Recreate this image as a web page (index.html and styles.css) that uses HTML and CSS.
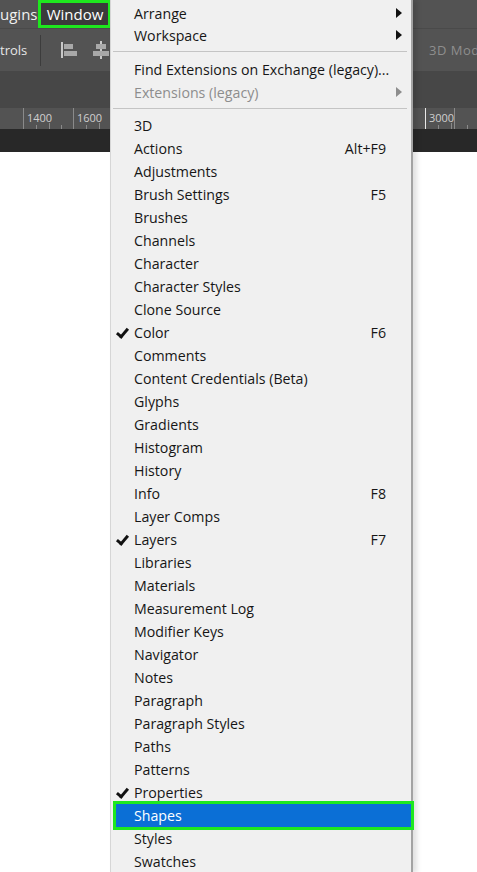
FILE: index.html
```html
<!DOCTYPE html>
<html lang="en">
<head>
  <meta charset="UTF-8" />
  <meta name="viewport" content="width=device-width, initial-scale=1.0"/>
  <title>Window Menu</title>
  <link rel="stylesheet" href="styles.css">
</head>
<body>
  <div class="app">
    <div class="menubar">
      <span class="mb-item">ugins</span>
      <span class="mb-item active">Window</span>
    </div>

    <div class="optionsbar">
      <span class="opt-text">trols</span>
      <span class="opt-sep"></span>
      <svg class="opt-icon" width="18" height="18" viewBox="0 0 18 18">
        <rect x="1" y="1" width="2" height="16" fill="#c8c8c8"/>
        <rect x="4" y="3" width="9" height="5" fill="#a8a8a8"/>
        <rect x="4" y="10" width="13" height="5" fill="#a8a8a8"/>
      </svg>
      <svg class="opt-icon" width="18" height="18" viewBox="0 0 18 18">
        <rect x="8" y="0" width="2" height="18" fill="#c8c8c8"/>
        <rect x="4" y="3" width="10" height="5" fill="#a8a8a8"/>
        <rect x="1" y="10" width="16" height="5" fill="#a8a8a8"/>
      </svg>
      <span class="opt-spacer"></span>
      <div class="opt-right">
        <span class="opt-sep"></span>
        <span class="opt-dim">3D Mode</span>
      </div>
    </div>

    <div class="panelbar"></div>

    <div class="ruler">
      <div class="ruler-left">
        <span class="mark">1400</span>
        <span class="mark">1600</span>
      </div>
      <div class="ruler-right">
        <span class="mark bright">3000</span>
        <span class="mark"></span>
      </div>
    </div>

    <div class="docstrip"></div>
    <div class="canvas"></div>

    <div class="menu">
      <div class="item"><span class="label">Arrange</span><span class="arrow"></span></div>
      <div class="item"><span class="label">Workspace</span><span class="arrow"></span></div>
      <div class="sep"></div>
      <div class="item"><span class="label">Find Extensions on Exchange (legacy)...</span></div>
      <div class="item disabled"><span class="label">Extensions (legacy)</span><span class="arrow"></span></div>
      <div class="sep short"></div>
      <div class="item"><span class="label">3D</span></div>
      <div class="item"><span class="label">Actions</span><span class="key">Alt+F9</span></div>
      <div class="item"><span class="label">Adjustments</span></div>
      <div class="item"><span class="label">Brush Settings</span><span class="key">F5</span></div>
      <div class="item"><span class="label">Brushes</span></div>
      <div class="item"><span class="label">Channels</span></div>
      <div class="item"><span class="label">Character</span></div>
      <div class="item"><span class="label">Character Styles</span></div>
      <div class="item"><span class="label">Clone Source</span></div>
      <div class="item checked"><span class="label">Color</span><span class="key">F6</span></div>
      <div class="item"><span class="label">Comments</span></div>
      <div class="item"><span class="label">Content Credentials (Beta)</span></div>
      <div class="item"><span class="label">Glyphs</span></div>
      <div class="item"><span class="label">Gradients</span></div>
      <div class="item"><span class="label">Histogram</span></div>
      <div class="item"><span class="label">History</span></div>
      <div class="item"><span class="label">Info</span><span class="key">F8</span></div>
      <div class="item"><span class="label">Layer Comps</span></div>
      <div class="item checked"><span class="label">Layers</span><span class="key">F7</span></div>
      <div class="item"><span class="label">Libraries</span></div>
      <div class="item"><span class="label">Materials</span></div>
      <div class="item"><span class="label">Measurement Log</span></div>
      <div class="item"><span class="label">Modifier Keys</span></div>
      <div class="item"><span class="label">Navigator</span></div>
      <div class="item"><span class="label">Notes</span></div>
      <div class="item"><span class="label">Paragraph</span></div>
      <div class="item"><span class="label">Paragraph Styles</span></div>
      <div class="item"><span class="label">Paths</span></div>
      <div class="item"><span class="label">Patterns</span></div>
      <div class="item checked"><span class="label">Properties</span></div>
      <div class="item selected"><span class="label">Shapes</span></div>
      <div class="item"><span class="label">Styles</span></div>
      <div class="item"><span class="label">Swatches</span></div>
    </div>
  </div>
</body>
</html>
```

FILE: styles.css
```css
* {
  box-sizing: border-box;
  margin: 0;
  padding: 0;
}

body {
  font-family: 'Open Sans', 'Noto Sans', sans-serif;
  background: #fff;
  overflow: hidden;
}

.app {
  position: relative;
  width: 477px;
  height: 872px;
  overflow: hidden;
  display: flex;
  flex-direction: column;
}

.menubar {
  height: 28px;
  background: #535353;
  display: flex;
  align-items: center;
  gap: 1px;
  color: #f0f0f0;
  font-size: 15px;
}

.mb-item.active {
  background: #3b3b3b;
  height: 28px;
  width: 73px;
  border: 3px solid #1ee81e;
  display: flex;
  align-items: center;
  justify-content: center;
  color: #fff;
}

.optionsbar {
  height: 43px;
  background: #535353;
  border-top: 1px solid #4a4a4a;
  display: flex;
  align-items: center;
  font-size: 13px;
  color: #e6e6e6;
}

.opt-text {
  width: 40px;
}

.opt-sep {
  width: 1px;
  height: 31px;
  background: #3c3c3c;
  margin-right: 19px;
}

.opt-icon {
  margin-right: 14px;
}

.opt-spacer {
  flex: 1;
}

.opt-right {
  width: 60px;
  flex-shrink: 0;
  display: flex;
  align-items: center;
  overflow: hidden;
}

.opt-dim {
  color: #8e8e8e;
  letter-spacing: 0.5px;
  margin-left: -7px;
  white-space: nowrap;
}

.panelbar {
  height: 37px;
  background: #474747;
}

.ruler {
  height: 21px;
  background: #535353;
  display: flex;
  justify-content: space-between;
  font-size: 11px;
  color: #cfcfcf;
}

.ruler-left,
.ruler-right {
  display: flex;
}

.ruler-left {
  padding-left: 23px;
}

.mark {
  width: 50px;
  height: 21px;
  border-left: 1px solid #8a8a8a;
  padding: 2px 0 0 3px;
  background: linear-gradient(#8a8a8a, #8a8a8a) 12px 17px / 1px 4px no-repeat,
              linear-gradient(#8a8a8a, #8a8a8a) 25px 15px / 1px 6px no-repeat,
              linear-gradient(#8a8a8a, #8a8a8a) 37px 17px / 1px 4px no-repeat;
}

.ruler-right .mark.bright {
  border-left-color: #e8e8e8;
}

.ruler-right {
  width: 52px;
}

.docstrip {
  height: 23px;
  background: #282828;
}

.canvas {
  flex: 1;
  background: #fff;
}

/* dropdown */
.menu {
  position: absolute;
  top: 0;
  left: 110px;
  width: 303px;
  background: #f0f0f0;
  border-left: 1px solid #d6d6d6;
  border-right: 2px solid #a3a3a3;
  box-shadow: 4px 0 5px rgba(0, 0, 0, 0.12);
  padding-top: 2px;
  font-size: 14.2px;
  color: #161616;
}

.item {
  position: relative;
  height: 23px;
  display: flex;
  align-items: center;
  padding: 0 25px 0 23px;
  white-space: nowrap;
}

.item:first-child {
  height: 22px;
}

.label {
  flex: 1;
}

.key {
  text-align: right;
}

.item.disabled {
  color: #8d8d8d;
}

.arrow {
  position: absolute;
  right: 9px;
  top: 6px;
  width: 0;
  height: 0;
  border-top: 5px solid transparent;
  border-bottom: 5px solid transparent;
  border-left: 6px solid #111;
}

.item.disabled .arrow {
  border-left-color: #8d8d8d;
}

.item.checked::before {
  content: '';
  position: absolute;
  left: 8px;
  top: 5px;
  width: 4px;
  height: 9px;
  border-right: 3px solid #111;
  border-bottom: 3px solid #111;
  transform: rotate(40deg);
}

.sep {
  height: 1px;
  background: #c4c4c4;
  margin: 4px 4px 6px 2px;
}

.sep.short {
  margin-bottom: 5px;
}

.item.selected {
  background: #0b6fd6;
  color: #fff;
  margin-left: 5px;
  padding-left: 18px;
  outline: 3px solid #1ee81e;
}
```
